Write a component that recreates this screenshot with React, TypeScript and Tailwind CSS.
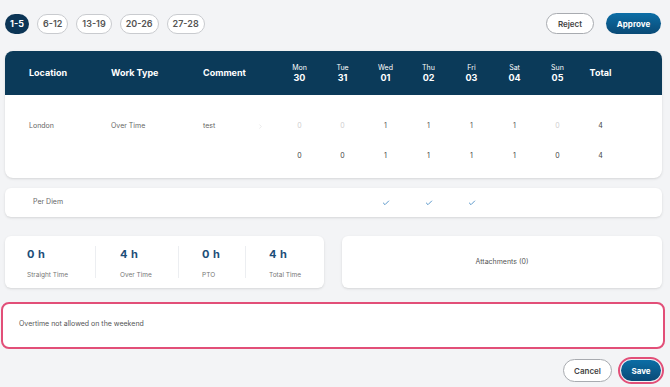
import { Check, ChevronRight } from "lucide-react";

const days = [
  { d: "Mon", n: "30" },
  { d: "Tue", n: "31" },
  { d: "Wed", n: "01" },
  { d: "Thu", n: "02" },
  { d: "Fri", n: "03" },
  { d: "Sat", n: "04" },
  { d: "Sun", n: "05" },
];

const rowOne = ["0", "0", "1", "1", "1", "1", "0"];
const rowTwo = ["0", "0", "1", "1", "1", "1", "0"];

const stats = [
  { v: "0 h", l: "Straight Time", w: "w-[90px]", pl: "pl-[22px]" },
  { v: "4 h", l: "Over Time", w: "w-[83px]", pl: "pl-[24px]" },
  { v: "0 h", l: "PTO", w: "w-[67px]", pl: "pl-[23px]" },
  { v: "4 h", l: "Total Time", w: "w-[79px]", pl: "pl-[23px]" },
];

const grid = "grid grid-cols-[24px_82px_92px_75px_repeat(8,43px)]";

export default function App() {
  return (
    <div className="w-[670px] h-[387px] overflow-hidden bg-[#f3f4f6] font-['Inter',sans-serif] text-[#333]">
      {/* Top bar */}
      <div className="flex items-center justify-between pl-[5px] pr-[9px] pt-[13px] h-[34px]">
        <div className="flex items-center gap-[8px]">
          <span className="h-[20px] w-[24px] rounded-full bg-[#0c3556] text-white text-[9px] font-bold flex items-center justify-center">1-5</span>
          {["6-12", "13-19", "20-26", "27-28"].map((p) => (
            <span key={p} className="h-[20px] px-[5px] rounded-full border border-[#c9cbcf] bg-white text-[9px] font-semibold text-[#555] flex items-center">{p}</span>
          ))}
        </div>
        <div className="flex items-center gap-[12px]">
          <button className="h-[21px] w-[48px] rounded-full border border-[#a8abb0] bg-white text-[8px] font-semibold text-[#444]">Reject</button>
          <button className="h-[21px] w-[55px] rounded-full bg-gradient-to-b from-[#0c6ea6] to-[#0a4a76] text-[8px] font-bold text-white">Approve</button>
        </div>
      </div>

      {/* Table */}
      <div className="mx-[5px] mt-[17px] w-[657px] rounded-[8px] bg-white shadow-sm overflow-hidden">
        <div className={`${grid} h-[44px] items-center bg-[#0b3a59] text-white`}>
          <div />
          <div className="text-[9px] font-bold">Location</div>
          <div className="text-[9px] font-bold">Work Type</div>
          <div className="text-[9px] font-bold">Comment</div>
          {days.map((x) => (
            <div key={x.d} className="flex flex-col items-center leading-[10px]">
              <span className="text-[7px]">{x.d}</span>
              <span className="text-[9px] font-bold">{x.n}</span>
            </div>
          ))}
          <div className="text-[9px] font-bold text-center">Total</div>
        </div>
        <div className="pt-[22px] pb-[13px]">
          <div className={`${grid} h-[18px] items-center text-[7px] text-[#666]`}>
            <div />
            <div>London</div>
            <div>Over Time</div>
            <div className="flex items-center justify-between pr-[14px]">
              <span>test</span>
              <ChevronRight size={7} className="text-[#ddd]" />
            </div>
            {rowOne.map((v, i) => (
              <div key={i} className={`text-center ${v === "0" ? "text-[#cfcfcf]" : "text-[#555]"}`}>{v}</div>
            ))}
            <div className="text-center text-[#444]">4</div>
          </div>
          <div className={`${grid} mt-[12px] h-[18px] items-center text-[7px] text-[#444]`}>
            <div />
            <div />
            <div />
            <div />
            {rowTwo.map((v, i) => (
              <div key={i} className="text-center">{v}</div>
            ))}
            <div className="text-center">4</div>
          </div>
        </div>
      </div>

      {/* Per Diem */}
      <div className={`mx-[5px] mt-[10px] w-[657px] h-[29px] rounded-[6px] bg-white shadow-sm ${grid} items-center text-[7px] text-[#666]`}>
        <div />
        <div className="pl-[4px]">Per Diem</div>
        <div />
        <div />
        <div />
        <div />
        {[0, 1, 2].map((i) => (
          <div key={i} className="flex justify-center">
            <Check size={8} strokeWidth={2.5} className="text-[#3d86c0]" />
          </div>
        ))}
      </div>

      {/* Stats + attachments */}
      <div className="mx-[5px] mt-[19px] flex gap-[18px]">
        <div className="w-[319px] h-[52px] rounded-[6px] bg-white shadow-sm flex items-center">
          {stats.map((s, i) => (
            <div key={i} className={`${s.w} h-full flex items-center`}>
              {i > 0 && <div className="h-[32px] w-px bg-[#eceef1]" />}
              <div className={`${s.pl} flex flex-col gap-[11px] pt-[2px]`}>
                <span className="text-[11px] font-bold leading-[12px] text-[#1d4e78] tracking-[0.5px]">{s.v}</span>
                <span className="text-[6.5px] leading-[8px] text-[#777]">{s.l}</span>
              </div>
            </div>
          ))}
        </div>
        <div className="w-[320px] h-[52px] rounded-[6px] bg-white shadow-sm flex items-center justify-center text-[7px] text-[#555]">
          Attachments (0)
        </div>
      </div>

      {/* Comment */}
      <div className="mx-[1px] mt-[14px] w-[664px] h-[47px] rounded-[8px] border-2 border-[#e24f78] bg-white pl-[16px] pt-[15px] text-[7px] text-[#555]">
        Overtime not allowed on the weekend
      </div>

      {/* Footer */}
      <div className="mt-[8px] flex items-center justify-end gap-[6px] pr-[6px]">
        <button className="h-[23px] w-[49px] rounded-full border border-[#a8abb0] bg-white text-[8px] font-semibold text-[#444]">Cancel</button>
        <div className="rounded-full border-2 border-[#e24f78] p-px">
          <button className="h-[21px] w-[40px] block rounded-full bg-gradient-to-b from-[#0c6ea6] to-[#0a4a76] text-[8px] font-bold text-white">Save</button>
        </div>
      </div>
    </div>
  );
}
